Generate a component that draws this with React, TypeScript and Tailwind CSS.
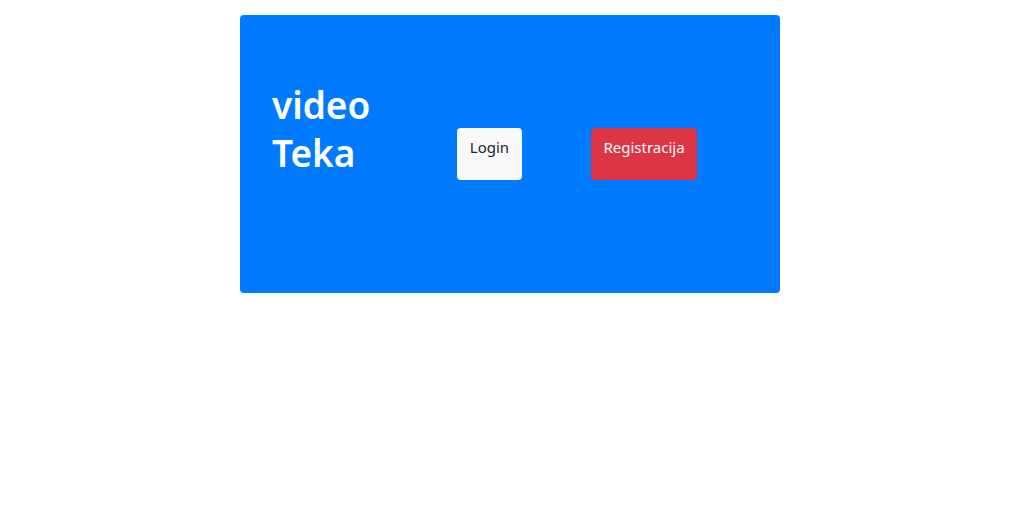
export default function App() {
  return (
    <div className="min-h-screen bg-white font-['Noto_Sans',sans-serif]">
      <div className="ml-[240px] mt-[15px] flex h-[278px] w-[540px] items-start rounded bg-[#007bff] pl-8 pt-[66px]">
        {/* Title */}
        <h1 className="w-[185px] text-[37px] font-semibold leading-[48px] text-white">
          video
          <br />
          Teka
        </h1>

        {/* Buttons */}
        <button className="mt-[47px] flex h-[52px] w-[65px] items-start justify-center rounded bg-[#f8f9fa] pt-[7px] text-[15px] leading-6 text-[#212529]">
          Login
        </button>
        <button className="ml-[69px] mt-[47px] flex h-[52px] w-[106px] items-start justify-center rounded bg-[#dc3545] pt-[7px] text-[15px] leading-6 text-white">
          Registracija
        </button>
      </div>
    </div>
  );
}
